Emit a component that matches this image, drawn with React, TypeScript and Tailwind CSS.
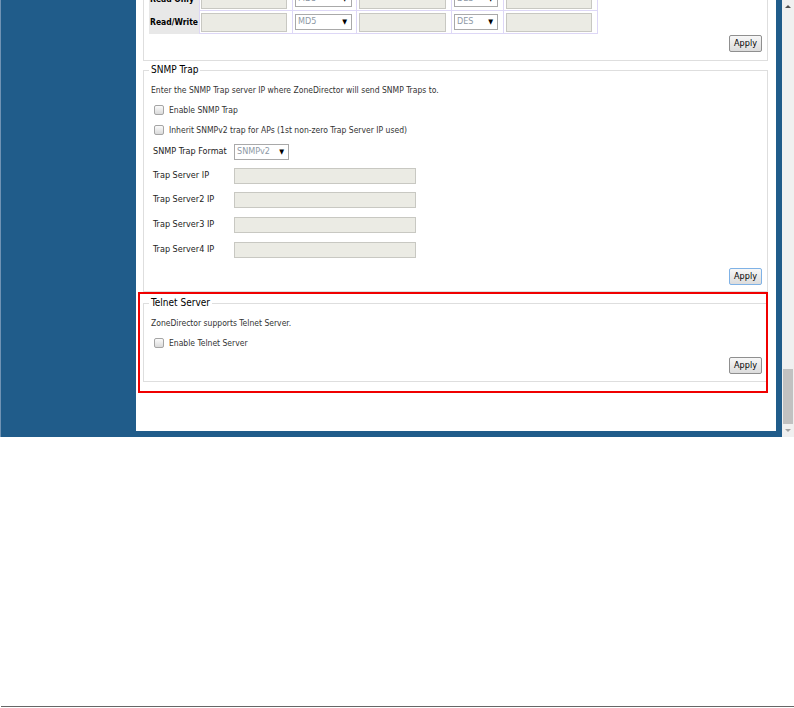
import React from "react";

const FONT = "font-['DejaVu_Sans_Condensed','DejaVu_Sans',sans-serif]";

function Check() {
  return (
    <span className="inline-block w-[10px] h-[10px] shrink-0 rounded-[2px] border border-[#a5a5a5] bg-linear-to-b from-[#fbfbfb] to-[#dadada]" />
  );
}

function Apply({ focused = false }: { focused?: boolean }) {
  return (
    <button
      className={
        focused
          ? "w-[33px] h-[17px] rounded-[2px] border border-[#7fb2e6] bg-linear-to-b from-[#f7f7f7] to-[#dcdcdc] text-[9px] leading-none text-black"
          : "w-[33px] h-[17px] rounded-[2px] border border-[#8f8f8f] bg-linear-to-b from-[#f7f7f7] to-[#dcdcdc] text-[9px] leading-none text-black"
      }
    >
      Apply
    </button>
  );
}

function Sel({ text, className }: { text: string; className: string }) {
  return (
    <div
      className={
        "h-[16px] flex items-center justify-between border border-[#a9a9a9] bg-white pl-[2px] pr-[4px] text-[9px] text-[#8e99a6] " +
        className
      }
    >
      <span>{text}</span>
      <span className="text-[7px] text-black">▼</span>
    </div>
  );
}

function GreyInput({ className }: { className: string }) {
  return <div className={"bg-[#ebebe4] border border-[#c8c8c2] " + className} />;
}

function TableRow({ label }: { label: string }) {
  return (
    <div className="flex h-[23px]">
      <div className="w-[50px] bg-[#e8e8e8] flex items-center pl-[1px] text-[8.5px] font-bold text-black whitespace-nowrap overflow-hidden">
        {label}
      </div>
      <div className="w-[93px] border-l border-b border-[#ddd7f6] flex items-center pl-[1px]">
        <GreyInput className="w-[86px] h-[19px]" />
      </div>
      <div className="w-[64px] border-l border-b border-[#ddd7f6] flex items-center pl-[2px]">
        <Sel text="MD5" className="w-[57px]" />
      </div>
      <div className="w-[95px] border-l border-b border-[#ddd7f6] flex items-center pl-[2px]">
        <GreyInput className="w-[87px] h-[19px]" />
      </div>
      <div className="w-[52px] border-l border-b border-[#ddd7f6] flex items-center pl-[2px]">
        <Sel text="DES" className="w-[44px]" />
      </div>
      <div className="w-[95px] border-l border-r border-b border-[#ddd7f6] flex items-center pl-[2px]">
        <GreyInput className="w-[86px] h-[19px]" />
      </div>
    </div>
  );
}

function CheckRow({ label, className }: { label: string; className: string }) {
  return (
    <div className={"h-[14px] flex items-center pl-[3px] " + className}>
      <Check />
      <span className="ml-[5px] text-[8.5px] text-[#333]">{label}</span>
    </div>
  );
}

function IpRow({ label, className }: { label: string; className: string }) {
  return (
    <div className={"flex items-center h-[16px] pl-[2px] " + className}>
      <span className="w-[81px] text-[9px] text-[#222]">{label}</span>
      <GreyInput className="w-[182px] h-[16px]" />
    </div>
  );
}

export default function App() {
  return (
    <div className={"w-[794px] h-[708px] bg-white flex flex-col " + FONT}>
      <div className="flex h-[437px] shrink-0">
        <div className="flex w-[782px] h-[437px] bg-[#205c8a] border-l border-[#7093b4]">
          <div className="w-[135px] shrink-0" />
          <div className="w-[640px] h-[431px] bg-white overflow-hidden relative">
            <div className="pl-[7px] pr-[8px] -mt-[12px]">
              {/* SNMPv3 fieldset (cut off at top) */}
              <div className="border-x border-b border-[#dedede] pl-[5px] pr-[5px] pb-[8px]">
                <TableRow label="Read Only" />
                <TableRow label="Read/Write" />
                <div className="flex justify-end mt-[1px]">
                  <Apply />
                </div>
              </div>

              {/* SNMP Trap */}
              <fieldset className="mt-[2px] border border-[#dedede] pl-[5px] pr-[5px] pb-[6px]">
                <legend className="px-[2px] text-[10px] leading-[14px] text-black">SNMP Trap</legend>
                <div className="pl-[2px]">
                  <div className="mt-[6px] h-[14px] flex items-center text-[8.5px] text-[#333]">
                    Enter the SNMP Trap server IP where ZoneDirector will send SNMP Traps to.
                  </div>
                  <CheckRow label="Enable SNMP Trap" className="mt-[6px]" />
                  <CheckRow label="Inherit SNMPv2 trap for APs (1st non-zero Trap Server IP used)" className="mt-[6px]" />
                  <div className="mt-[8px] h-[14px] flex items-center pl-[2px]">
                    <span className="w-[81px] text-[9px] text-[#222]">SNMP Trap Format</span>
                    <Sel text="SNMPv2" className="w-[55px] h-[14px] text-[#8a8a8a]" />
                  </div>
                  <IpRow label="Trap Server IP" className="mt-[9px]" />
                  <IpRow label="Trap Server2 IP" className="mt-[8px]" />
                  <IpRow label="Trap Server3 IP" className="mt-[9px]" />
                  <IpRow label="Trap Server4 IP" className="mt-[9px]" />
                </div>
                <div className="flex justify-end mt-[10px]">
                  <Apply focused />
                </div>
              </fieldset>

              {/* Telnet Server */}
              <fieldset className="mt-[4px] border border-[#dedede] pl-[5px] pr-[5px] pb-[7px]">
                <legend className="px-[2px] text-[10px] leading-[14px] text-black">Telnet Server</legend>
                <div className="pl-[2px]">
                  <div className="mt-[6px] h-[14px] flex items-center text-[8.5px] text-[#333]">
                    ZoneDirector supports Telnet Server.
                  </div>
                  <CheckRow label="Enable Telnet Server" className="mt-[6px]" />
                </div>
                <div className="flex justify-end mt-[7px]">
                  <Apply />
                </div>
              </fieldset>
            </div>

            {/* red annotation box */}
            <div className="absolute left-[2px] top-[292px] w-[630px] h-[101px] border-2 border-[#f00000]" />
          </div>
        </div>
        <div className="w-[12px] h-[437px] bg-[#f0f0f0] flex flex-col items-center">
          <div className="h-[12px] flex items-center justify-center">
            <span className="w-0 h-0 border-x-[3px] border-x-transparent border-b-[3px] border-b-[#505050]" />
          </div>
          <div className="flex-1" />
          <div className="w-[10px] h-[55px] bg-[#c1c1c1]" />
          <div className="h-[13px] flex items-center justify-center">
            <span className="w-0 h-0 border-x-[3px] border-x-transparent border-t-[3px] border-t-[#a3a3a3]" />
          </div>
        </div>
      </div>
      <div className="mt-auto mb-[1px] ml-[1px] h-px bg-[#666666]" />
    </div>
  );
}
